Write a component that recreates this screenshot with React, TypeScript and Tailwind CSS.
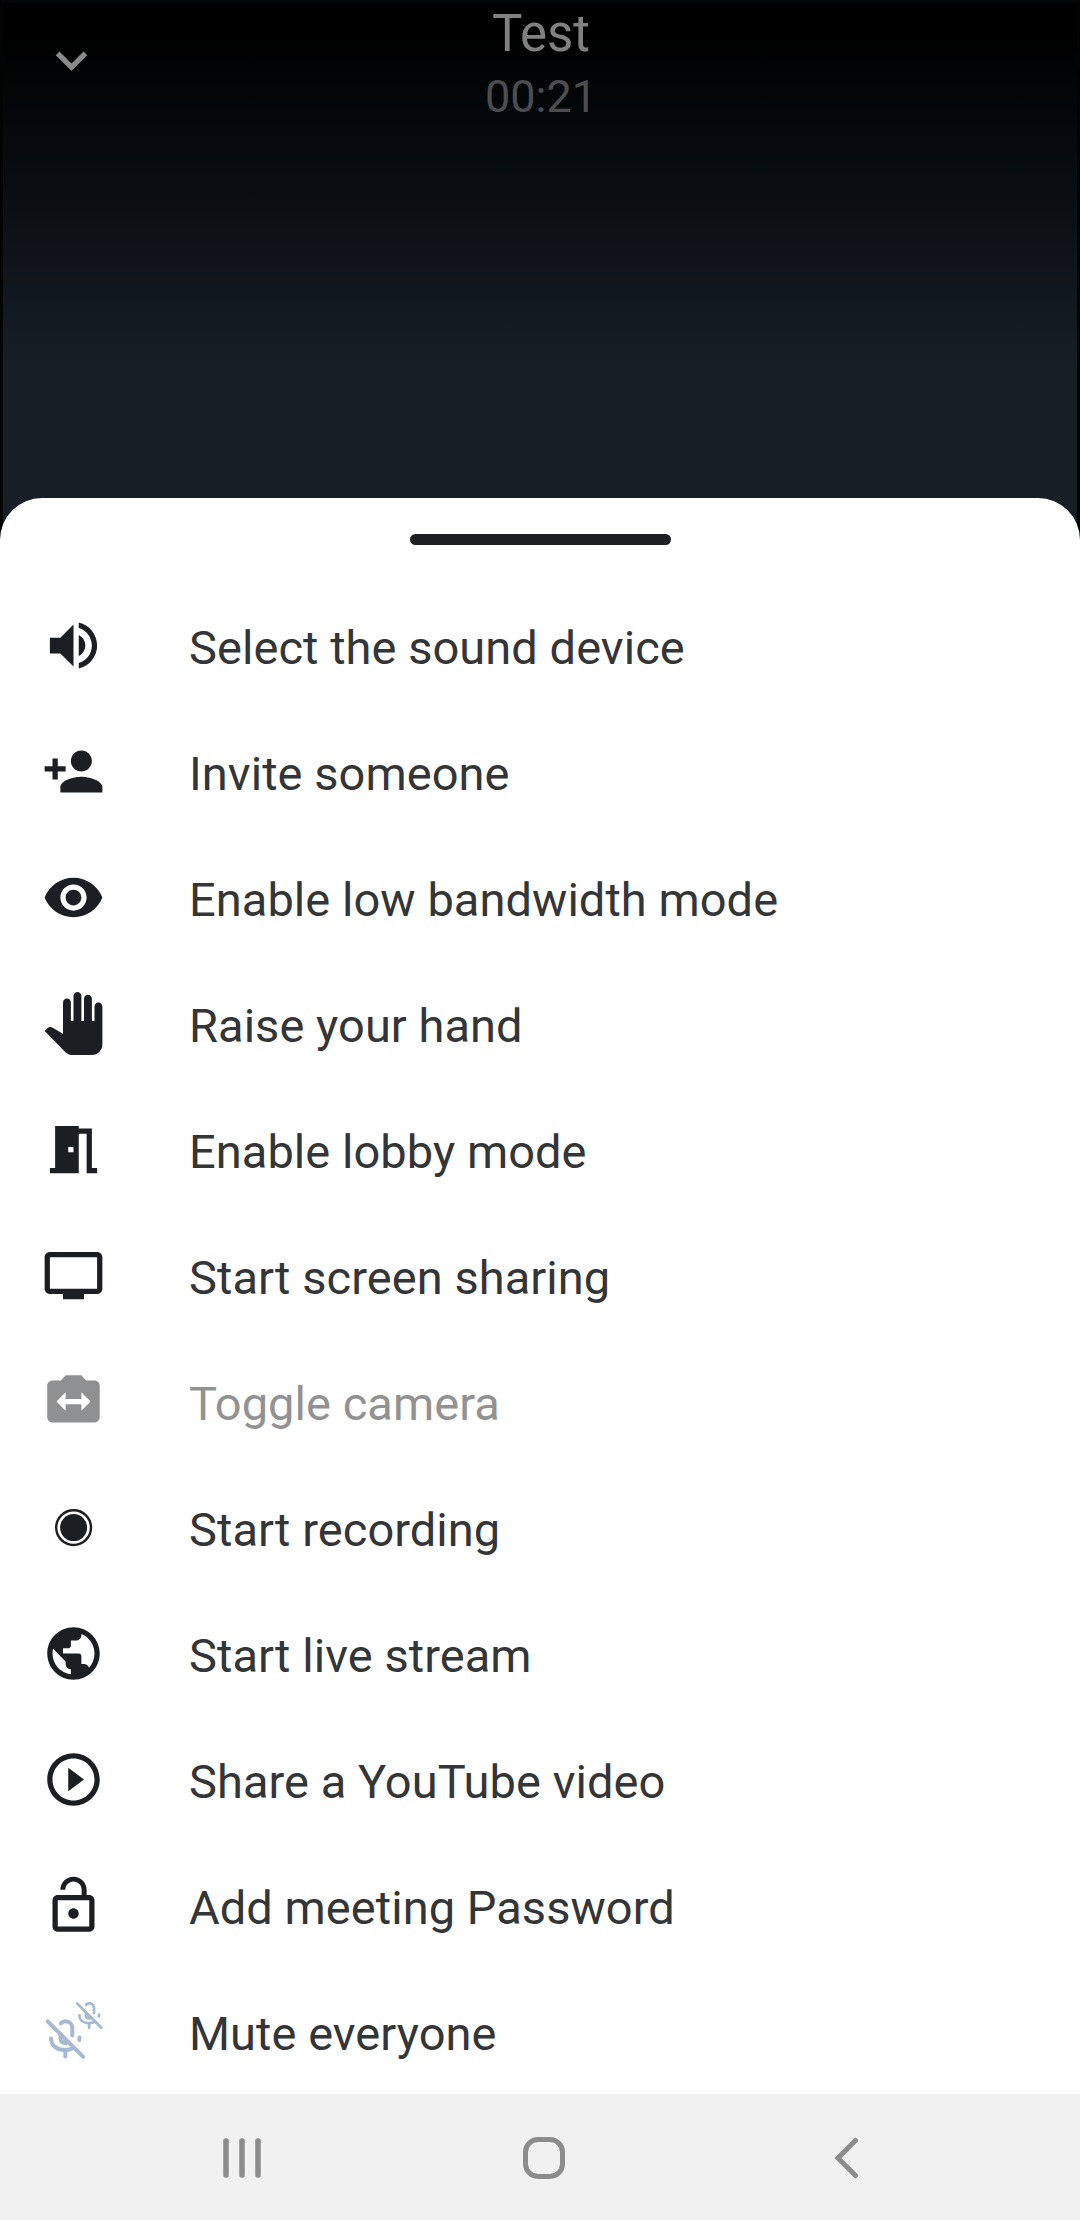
import React from "react";
import {
  MdExpandMore,
  MdLockOpen,
  MdMeetingRoom,
  MdPanTool,
  MdPersonAdd,
  MdPlayCircleOutline,
  MdPublic,
  MdSwitchCamera,
  MdTv,
  MdVisibility,
  MdVolumeUp,
} from "react-icons/md";

function RecordIcon() {
  return (
    <svg viewBox="0 0 63 63" className="w-[63px] h-[63px]" fill="none">
      <circle cx="31.6" cy="31.6" r="17.4" stroke="currentColor" strokeWidth="2.4" />
      <circle cx="31.6" cy="31.6" r="13.5" fill="currentColor" />
    </svg>
  );
}

function MicOff() {
  return (
    <>
      <path d="M5.700 21.300 41 56.700" />
      <path d="M18.800 23.500c1.300-1.600 3-2.300 5-2.200 3.700.2 6.500 3 6.500 6.700v7.500" />
      <path d="M9 38.500c.3 7 5.800 11.500 13.500 11.500 3.300 0 5.600-.5 7.500-1.600" />
      <path d="M18.500 34v4.500c.3 3 2 4.500 5 4.500v-3.500M23.300 50v6.500M37.500 37.500l-.2 2.500" />
    </>
  );
}

function MuteEveryoneIcon() {
  return (
    <svg viewBox="0 0 63 63" className="w-[63px] h-[63px] text-[#a7b9d1]" fill="none" stroke="currentColor" strokeWidth="4" strokeLinecap="round">
      <MicOff />
      <g transform="translate(31.100 -11.300) scale(.69)">
        <MicOff />
      </g>
    </svg>
  );
}

const icon = "w-[63px] h-[63px]";

const items = [
  { icon: <MdVolumeUp className={icon} />, label: "Select the sound device" },
  { icon: <MdPersonAdd className={icon} />, label: "Invite someone" },
  { icon: <MdVisibility className={icon} />, label: "Enable low bandwidth mode" },
  { icon: <MdPanTool className={icon} />, label: "Raise your hand" },
  { icon: <MdMeetingRoom className={icon} />, label: "Enable lobby mode" },
  { icon: <MdTv className={icon} />, label: "Start screen sharing" },
  { icon: <MdSwitchCamera className={icon} />, label: "Toggle camera", disabled: true },
  { icon: <RecordIcon />, label: "Start recording" },
  { icon: <MdPublic className={icon} />, label: "Start live stream" },
  { icon: <MdPlayCircleOutline className={icon} />, label: "Share a YouTube video" },
  { icon: <MdLockOpen className={icon} />, label: "Add meeting Password" },
  { icon: <MuteEveryoneIcon />, label: "Mute everyone" },
];

export default function App() {
  return (
    <div className="w-[1080px] h-[2220px] flex flex-col overflow-hidden bg-black font-['Roboto',sans-serif]">
      {/* Call header, dimmed behind the sheet */}
      <header className="h-[540px] shrink-0 grid grid-cols-[1fr_auto_1fr] items-start border-x-3 border-t-3 border-x-[#020303] border-t-[#050607] bg-[linear-gradient(to_bottom,#000_0px,#000_30px,#05090c_130px,#0a0f13_200px,#0f141b_260px,#131a21_320px,#171e25_365px)]">
        <button className="ml-[37px] mt-[26px] justify-self-start text-[#8a8a8a]">
          <MdExpandMore className={icon} />
        </button>
        <div className="flex flex-col items-center pt-[1px] pl-[2px]">
          <h1 className="text-[51px] leading-[60px] text-[#808080]">Test</h1>
          <p className="text-[45px] leading-[60px] mt-[3px] text-[#4d4d4f]">00:21</p>
        </div>
      </header>

      {/* Bottom sheet */}
      <main className="h-[1596px] -mt-[42px] shrink-0 bg-white rounded-t-[42px] flex flex-col">
        <div className="w-[261px] h-[11px] mt-[36px] mb-[37px] shrink-0 self-center rounded-[6px] bg-[#1c1e22]" />
        <ul className="flex flex-col">
          {items.map((item) => (
            <li key={item.label} className={item.disabled ? "h-[126px] pl-[42px] flex items-center text-[#8e9092]" : "h-[126px] pl-[42px] flex items-center text-[#1b1e22]"}>
              {item.icon}
              <span className={item.disabled ? "ml-[84px] pt-[6px] text-[47px] tracking-[0.05px] text-[#929292]" : "ml-[84px] pt-[6px] text-[47px] tracking-[0.05px] text-[#343537]"}>
                {item.label}
              </span>
            </li>
          ))}
        </ul>
      </main>

      {/* System navigation */}
      <nav className="h-[126px] shrink-0 bg-[#f1f1f1] pl-[223px] pt-[2px] flex items-center">
        <svg width="38" height="42" viewBox="0 0 38 42" fill="none" stroke="#8c8c8c" strokeWidth="5.500" strokeLinecap="round">
          <path d="M3 4v34M19 4v34M35 4v34" />
        </svg>
        <svg className="ml-[262px]" width="42" height="42" viewBox="0 0 42 42" fill="none" stroke="#8c8c8c" strokeWidth="5">
          <rect x="2.500" y="2.500" width="37" height="37" rx="12.500" />
        </svg>
        <svg className="ml-[269px]" width="24" height="42" viewBox="0 0 24 42" fill="none" stroke="#8c8c8c" strokeWidth="5" strokeLinecap="round">
          <path d="M21.500 3.500 4 21 21.500 38.500" />
        </svg>
      </nav>
    </div>
  );
}
